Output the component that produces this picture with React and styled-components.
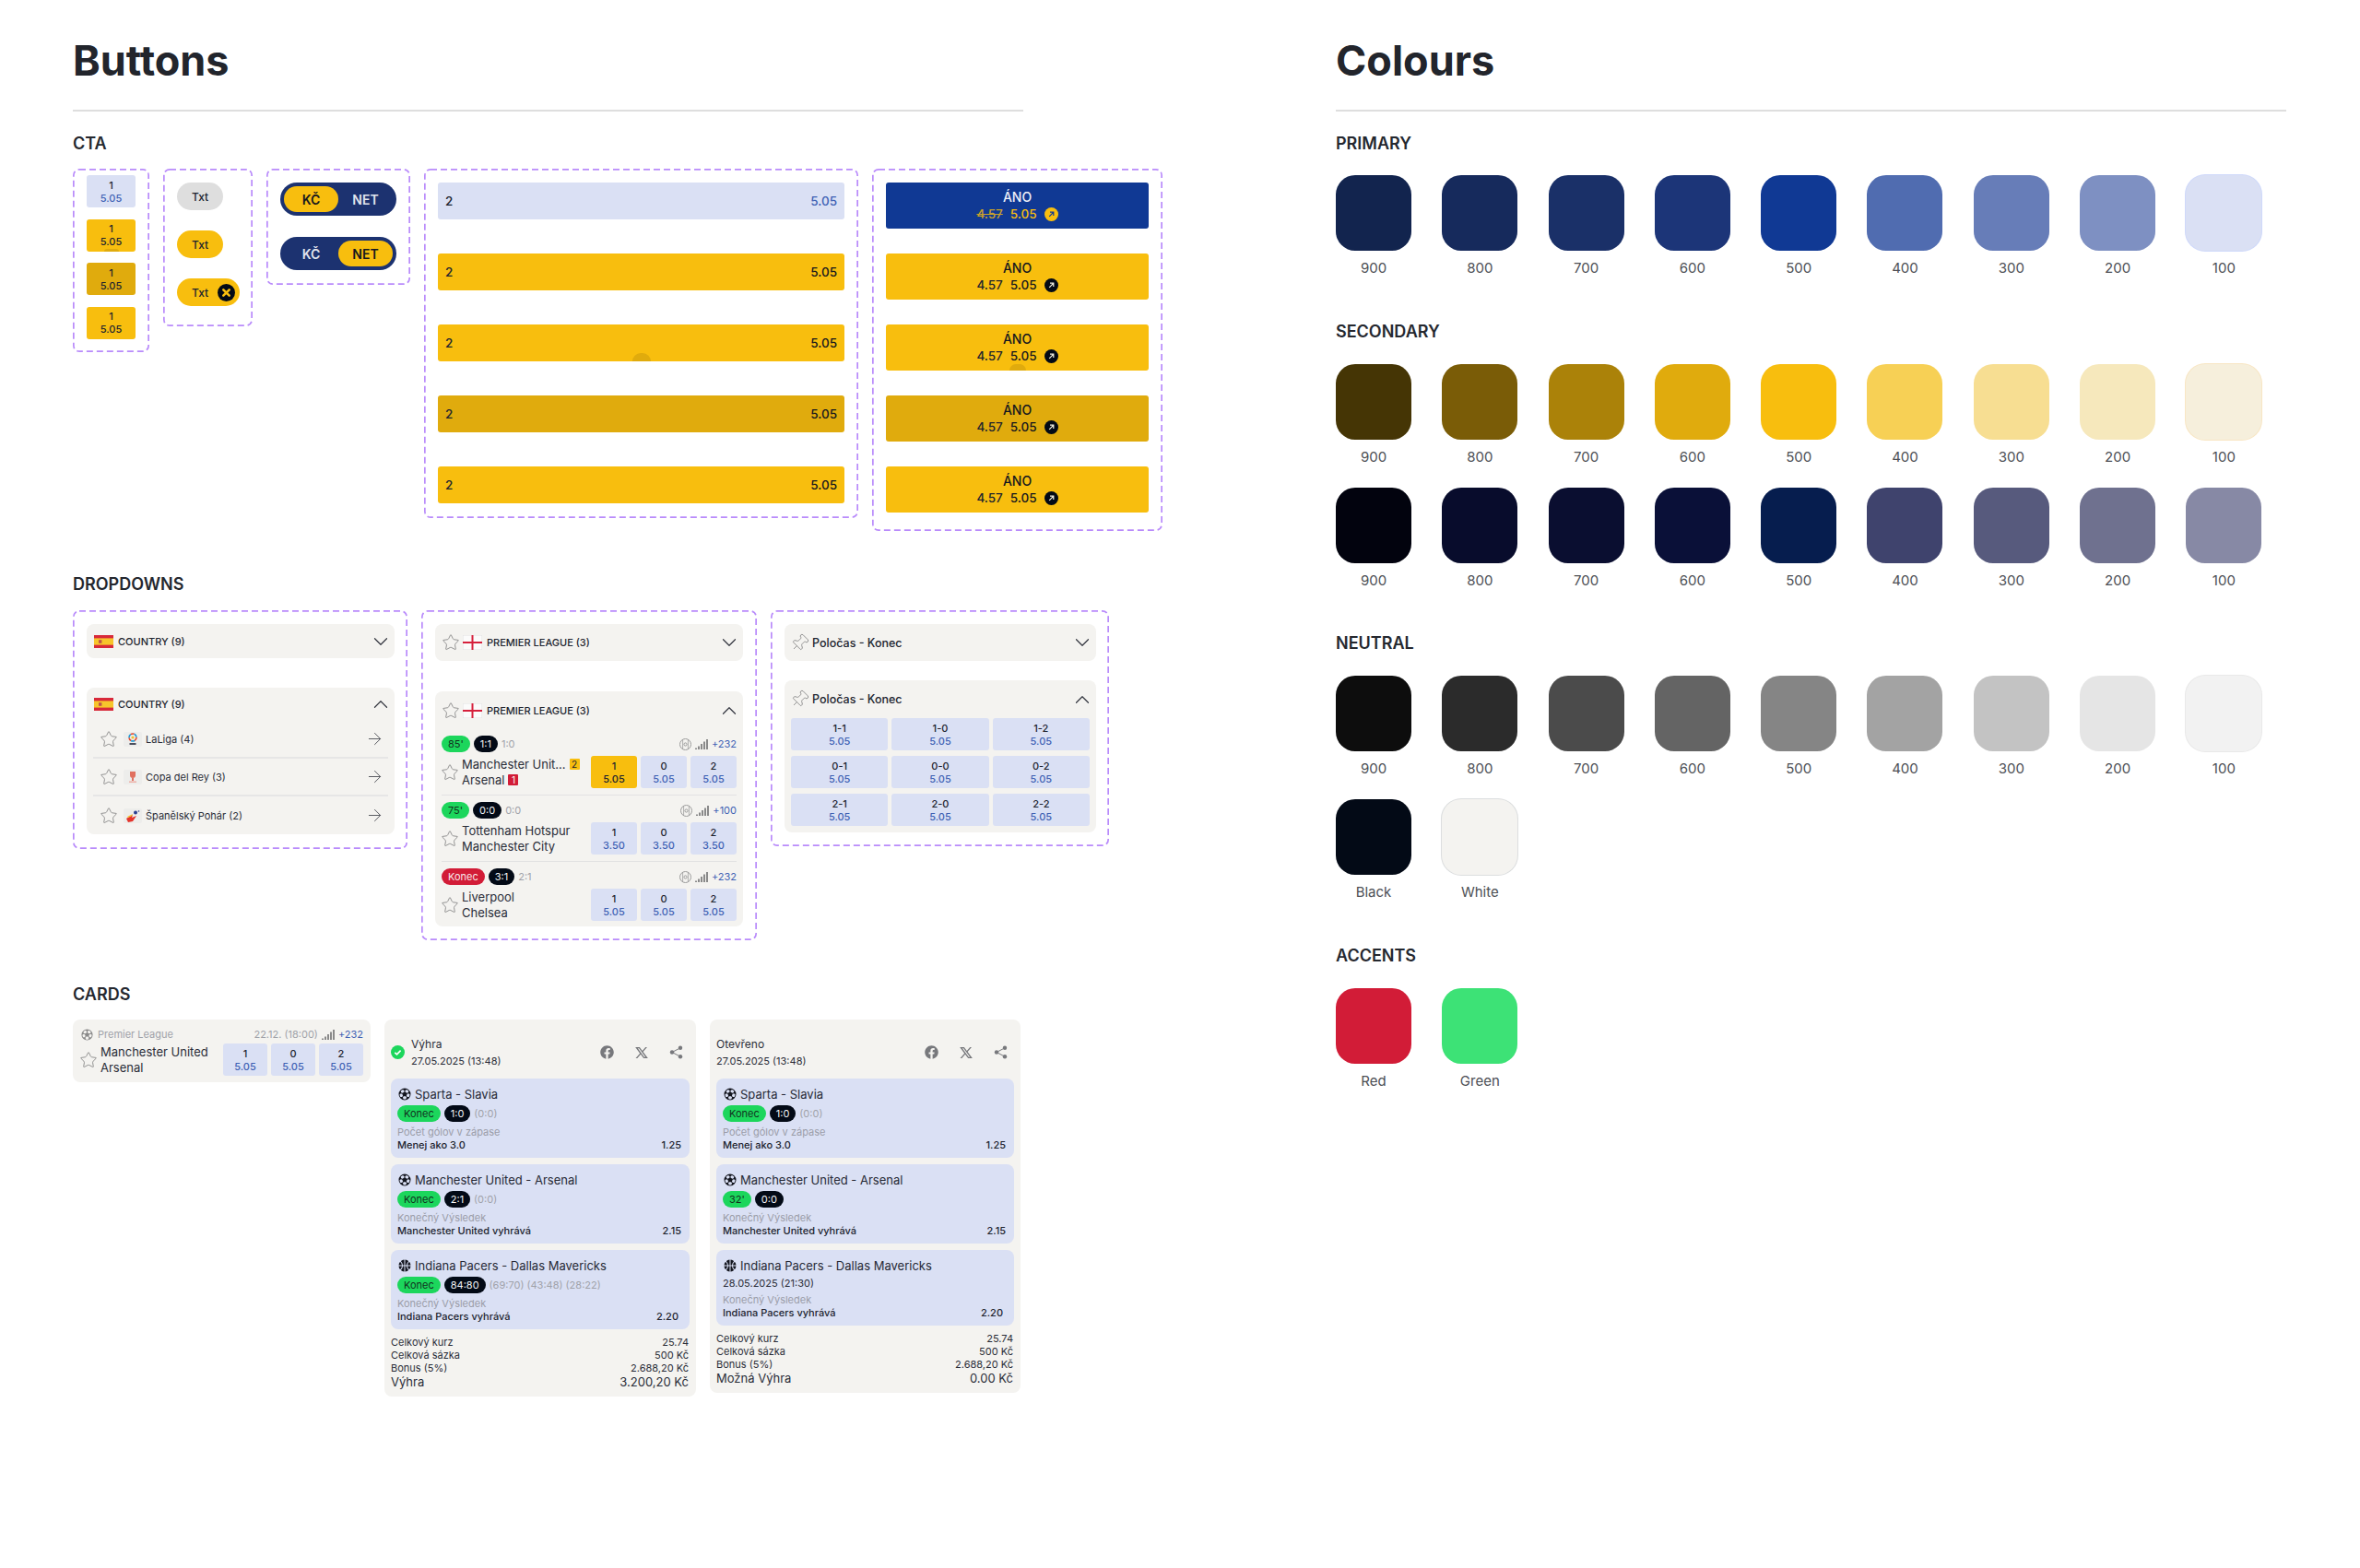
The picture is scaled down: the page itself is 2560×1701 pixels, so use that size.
import React from 'react';
import styled, { createGlobalStyle } from 'styled-components';
import { Star, ChevronDown, ChevronUp, ArrowRight, Pin } from 'lucide-react';
import { FaFacebook } from 'react-icons/fa';
import { PiSoccerBallFill, PiBasketballFill } from 'react-icons/pi';
import { RiTwitterXLine } from 'react-icons/ri';

const GlobalStyle = createGlobalStyle`
  html, body {
    margin: 0;
    padding: 0;
    background: #fff;
  }
  body {
    font-family: "Inter", "Noto Sans", sans-serif;
    color: #1a1e2c;
  }
  * { box-sizing: border-box; }
`;

const Page = styled.div`
  width: 2560px;
  height: 1701px;
  overflow: hidden;
  padding: 39px 0 0 79px;
  display: grid;
  grid-template-columns: 1031px 1031px;
  column-gap: 339px;
  align-items: start;
`;

const Column = styled.section`
  display: flex;
  flex-direction: column;
  min-width: 0;
`;

const Title = styled.h1`
  margin: 0 0 26px;
  font-size: 45px;
  line-height: 54px;
  font-weight: 700;
  color: #22252c;
`;

const Rule = styled.div`
  height: 2px;
  background: #dedede;
`;

const SectionLabel = styled.h2`
  margin: ${p => p.$top}px 0 ${p => p.$bottom}px;
  font-size: 18px;
  line-height: 22px;
  font-weight: 600;
  color: #25282f;
`;

const BoxRow = styled.div`
  display: flex;
  align-items: flex-start;
  gap: 15px;
`;

// css dashed borders come out too short here, so the dash is set by hand
const DashedBox = styled.div`
  width: ${p => p.$w}px;
  flex: none;
  padding: ${p => p.$pad};
  display: flex;
  flex-direction: column;
  gap: ${p => p.$gap}px;
  border: 2px solid transparent;
  border-radius: 7px;
  background-origin: border-box;
  background-image: url("data:image/svg+xml,%3Csvg xmlns='http://www.w3.org/2000/svg' width='100%25' height='100%25'%3E%3Crect width='100%25' height='100%25' fill='none' rx='7' ry='7' stroke='%23b98bfb' stroke-width='3.4' stroke-dasharray='7 4'/%3E%3C/svg%3E");
`;

/* odds */
const oddsBg = { idle: '#dae0f4', active: '#f8be0e', pressed: '#e0ab0d' };

const OddsBtn = styled.div`
  position: relative;
  overflow: hidden;
  width: ${p => (p.$w ? `${p.$w}px` : 'auto')};
  height: 35px;
  flex: none;
  display: flex;
  flex-direction: column;
  align-items: center;
  justify-content: center;
  border-radius: 3px;
  background: ${p => oddsBg[p.$state || 'idle']};
  font-size: 11px;
  line-height: 14px;
  font-weight: 500;
  color: #20232e;
`;

const OddsValue = styled.span`
  color: ${p => (p.$state && p.$state !== 'idle' ? '#20232e' : '#3f62b4')};
`;

const Ripple = styled.span`
  position: absolute;
  left: 50%;
  bottom: 0;
  transform: translateX(-50%);
  width: ${p => p.$w}px;
  height: ${p => p.$h}px;
  border-radius: ${p => p.$w / 2}px ${p => p.$w / 2}px 0 0;
  background: #e0ab0d;
`;

const Odds = ({ label, value, state, w, ripple }) => (
  <OddsBtn $state={state} $w={w}>
    <span>{label}</span>
    <OddsValue $state={state}>{value}</OddsValue>
    {ripple && <Ripple $w={16} $h={3} />}
  </OddsBtn>
);

/* chips and toggles */
const Chip = styled.div`
  align-self: flex-start;
  height: 30px;
  padding: ${p => (p.$closable ? '0 5px 0 16px' : '0 16px')};
  display: flex;
  align-items: center;
  gap: 10px;
  border-radius: 15px;
  background: ${p => (p.$grey ? '#dedede' : '#f8be0e')};
  font-size: 12px;
  font-weight: 500;
  color: #20232e;
`;

const Toggle = styled.div`
  width: 126px;
  height: 36px;
  padding: 4px;
  display: grid;
  grid-template-columns: 1fr 1fr;
  border-radius: 18px;
  background: #1c3270;
`;

const ToggleItem = styled.div`
  display: flex;
  align-items: center;
  justify-content: center;
  border-radius: 14px;
  background: ${p => (p.$on ? '#f8be0e' : 'transparent')};
  color: ${p => (p.$on ? '#14161f' : '#e2e5ee')};
  font-size: 14px;
  font-weight: 600;
`;

/* wide buttons */
const WideBtn = styled.div`
  position: relative;
  overflow: hidden;
  height: 40px;
  padding: 0 8px;
  display: flex;
  align-items: center;
  justify-content: space-between;
  border-radius: 3px;
  background: ${p => oddsBg[p.$state || 'idle']};
  font-size: 13.5px;
  font-weight: 500;
  color: #20232e;
`;

const WideValue = styled.span`
  color: ${p => (p.$state && p.$state !== 'idle' ? '#14161f' : '#3f62b4')};
`;

const BoostBtn = styled.div`
  position: relative;
  overflow: hidden;
  height: 50px;
  display: flex;
  flex-direction: column;
  align-items: center;
  justify-content: center;
  border-radius: 3px;
  background: ${p => (p.$state === 'blue' ? '#103994' : oddsBg[p.$state])};
  color: ${p => (p.$state === 'blue' ? '#eef0f8' : '#14161f')};
  font-size: 14px;
  line-height: 18px;
  font-weight: 500;
`;

const BoostLine = styled.div`
  display: flex;
  align-items: center;
  gap: 8px;
  font-size: 13.5px;
`;

const OldPrice = styled.span`
  color: ${p => (p.$blue ? '#c9a12a' : '#20232e')};
  text-decoration: ${p => (p.$blue ? 'line-through' : 'none')};
`;

const NewPrice = styled.span`
  color: ${p => (p.$blue ? '#f8be0e' : '#14161f')};
`;

const UpBadge = ({ blue }) => (
  <svg width="15" height="15" viewBox="0 0 15 15">
    <circle cx="7.5" cy="7.5" r="7.5" fill={blue ? '#f8be0e' : '#030a16'} />
    <path d="M5.2 9.8 9.6 5.4M6 5.2h3.8V9" fill="none" stroke={blue ? '#103994' : '#f3f0e2'} strokeWidth="1.2" />
  </svg>
);

const CloseBadge = () => (
  <svg width="19" height="19" viewBox="0 0 19 19">
    <circle cx="9.5" cy="9.5" r="9.5" fill="#030a16" />
    <path d="M6.3 6.3l6.4 6.4M12.7 6.3l-6.4 6.4" stroke="#f8be0e" strokeWidth="2.6" strokeLinecap="round" />
  </svg>
);

/* dropdowns */
const DropPanel = styled.div`
  width: 100%;
  margin-top: ${p => p.$top || 0}px;
  padding-bottom: ${p => p.$bottom || 0}px;
  border-radius: 8px;
  background: #f4f3f0;
`;

const DropHead = styled.div`
  height: ${p => p.$h}px;
  padding: 0 8px;
  display: flex;
  align-items: center;
  gap: 5px;
  font-size: ${p => p.$size || 11}px;
  font-weight: 500;
  color: #22252f;
`;

const HeadTitle = styled.span`
  flex: 1;
`;

// $bleed eats the empty margin lucide leaves round its glyphs
const IconSlot = styled.span`
  display: inline-flex;
  flex: none;
  color: ${p => p.$color || '#8a8a8a'};
  svg {
    margin: -${p => p.$bleed || 0}px;
  }
`;

const PinSlot = styled(IconSlot)`
  svg {
    transform: rotate(45deg);
  }
`;

const CountryRow = styled.div`
  height: 41px;
  margin: 0 7px;
  padding: 0 8px;
  display: flex;
  align-items: center;
  gap: 8px;
  border-bottom: ${p => (p.$last ? 'none' : '2px solid #e6e6e6')};
  font-size: 11px;
  color: #2a2d38;
`;

const LogoBox = styled.span`
  width: 20px;
  height: 16px;
  margin-right: -4px;
  flex: none;
  display: flex;
  align-items: center;
  justify-content: center;
  border-radius: 2px;
  background: #ededeb;
`;

const SpainFlag = () => (
  <svg width="21" height="14" viewBox="0 0 21 14">
    <rect width="21" height="14" fill="#d8293a" />
    <rect y="3.4" width="21" height="7.2" fill="#f7c52b" />
    <rect x="5" y="5.2" width="3.4" height="3.6" fill="#c0544a" />
  </svg>
);

const EnglandFlag = () => (
  <svg width="21" height="16" viewBox="0 0 21 16">
    <rect width="21" height="16" fill="#fbfbfb" stroke="#e2e2e2" />
    <path d="M9.5 0h2v16h-2zM0 7h21v2H0z" fill="#d6203c" />
  </svg>
);

const LaLigaLogo = () => (
  <svg width="12" height="14" viewBox="0 0 12 14">
    <circle cx="6" cy="5" r="4" fill="none" stroke="#e6492e" strokeWidth="1.6" strokeDasharray="4 4" />
    <circle cx="6" cy="5" r="4" fill="none" stroke="#1f9ad6" strokeWidth="1.6" strokeDasharray="4 4" strokeDashoffset="4" />
    <circle cx="6" cy="5" r="1.6" fill="#f2c230" />
    <rect x="2.5" y="11" width="7" height="2" fill="#4a4d5c" />
  </svg>
);

const CopaLogo = () => (
  <svg width="12" height="14" viewBox="0 0 12 14">
    <path d="M3 1h6v4a3 3 0 0 1-6 0z" fill="#e0705f" />
    <rect x="5" y="8" width="2" height="3" fill="#e0705f" />
    <rect x="2" y="11.5" width="8" height="1.5" fill="#eeb0a6" />
  </svg>
);

const PoharLogo = () => (
  <svg width="16" height="14" viewBox="0 0 16 14">
    <path d="M1 10l7-4-1 3 5-2-4 6-5 1z" fill="#e5342c" />
    <path d="M2 8l6-3-1 2-4 2z" fill="#f4c22b" />
    <circle cx="11" cy="3.5" r="2" fill="#2a3f8f" />
    <circle cx="14.5" cy="2" r="0.8" fill="#2a3f8f" />
  </svg>
);

/* match rows */
const MatchRow = styled.div`
  margin: 0 7px;
  padding: ${p => (p.$first ? '6px' : '7px')} 0 ${p => (p.$last ? '0' : '7px')};
  display: flex;
  flex-direction: column;
  gap: 4px;
  border-bottom: ${p => (p.$last ? 'none' : '1px solid #e2e2e2')};
`;

const Line = styled.div`
  display: flex;
  align-items: center;
  gap: ${p => p.$gap ?? 4}px;
  min-height: ${p => p.$h || 0}px;
`;

const Push = styled.span`
  flex: 1;
`;

const pillTones = {
  green: ['#1cd65c', '#12321f'],
  red: ['#d21c37', '#f8e7ea'],
  dark: ['#030a16', '#f2f3f5'],
};

const Pill = styled.span`
  height: 18px;
  padding: 0 7px;
  display: inline-flex;
  align-items: center;
  border-radius: 9px;
  background: ${p => pillTones[p.$tone][0]};
  color: ${p => pillTones[p.$tone][1]};
  font-size: 11px;
  font-weight: 400;
`;

const Muted = styled.span`
  font-size: 11px;
  color: #a0a2a9;
`;

const PlusCount = styled.span`
  font-size: 11px;
  color: #3f62b4;
`;

const TeamsBlock = styled.div`
  flex: 1;
  min-width: 0;
  display: flex;
  flex-direction: column;
  font-size: 13px;
  line-height: 17px;
  color: #2a2d38;
`;

const TeamLine = styled.div`
  display: flex;
  align-items: center;
  gap: 4px;
  white-space: nowrap;
`;

const CardTag = styled.span`
  width: 11px;
  height: 12px;
  display: inline-flex;
  align-items: center;
  justify-content: center;
  border-radius: 1px;
  background: ${p => (p.$red ? '#d21c37' : '#f8be0e')};
  color: ${p => (p.$red ? '#fff' : '#20232e')};
  font-size: 10px;
`;

const OddsGroup = styled.div`
  display: flex;
  gap: 4px;
  flex: none;
`;

const OddsGrid = styled.div`
  margin: 0 7px;
  display: grid;
  grid-template-columns: repeat(3, 1fr);
  column-gap: 4px;
  row-gap: 6px;
`;

const PitchIcon = () => (
  <svg width="13" height="13" viewBox="0 0 13 13" fill="none" stroke="#9a9a9a">
    <circle cx="6.5" cy="6.5" r="6" />
    <circle cx="6.5" cy="6.5" r="1.6" />
    <path d="M3.6 1.4v10.2M9.4 1.4v10.2" strokeWidth=".8" />
  </svg>
);

const SignalIcon = () => (
  <svg width="14" height="11" viewBox="0 0 14 11" fill="#8a8a8a">
    <rect x="0" y="9.5" width="2" height="1.5" />
    <rect x="3" y="7.5" width="2" height="3.5" />
    <rect x="6" y="5" width="2" height="6" />
    <rect x="9" y="2.5" width="2" height="8.5" />
    <rect x="12" y="0" width="2" height="11" />
  </svg>
);

const MatchStar = () => (
  <IconSlot $bleed={1.5}>
    <Star size={20} strokeWidth={1.1} />
  </IconSlot>
);

const Chevron = ({ up }) => (
  <IconSlot $color="#33363f" $bleed={6}>
    {up ? <ChevronUp size={26} strokeWidth={1.1} /> : <ChevronDown size={26} strokeWidth={1.1} />}
  </IconSlot>
);

const GoArrow = () => (
  <IconSlot $color="#55575e" $bleed={4}>
    <ArrowRight size={21} strokeWidth={1.1} />
  </IconSlot>
);

const PinIcon = () => (
  <PinSlot $bleed={2}>
    <Pin size={21} strokeWidth={1} />
  </PinSlot>
);

const matches = [
  { tone: 'green', status: "85'", score: '1:1', half: '1:0', more: '+232', home: 'Manchester Unit...', homeTag: '2', away: 'Arsenal', awayTag: '1', odds: '5.05', active: true },
  { tone: 'green', status: "75'", score: '0:0', half: '0:0', more: '+100', home: 'Tottenham Hotspur', away: 'Manchester City', odds: '3.50' },
  { tone: 'red', status: 'Konec', score: '3:1', half: '2:1', more: '+232', home: 'Liverpool', away: 'Chelsea', odds: '5.05' },
];

const Match = ({ m, first, last }) => (
  <MatchRow $first={first} $last={last}>
    <Line>
      <Pill $tone={m.tone}>{m.status}</Pill>
      <Pill $tone="dark">{m.score}</Pill>
      <Muted>{m.half}</Muted>
      <Push />
      <PitchIcon />
      <SignalIcon />
      <PlusCount>{m.more}</PlusCount>
    </Line>
    <Line $gap={5}>
      <MatchStar />
      <TeamsBlock>
        <TeamLine>
          {m.home}
          {m.homeTag && <CardTag>{m.homeTag}</CardTag>}
        </TeamLine>
        <TeamLine>
          {m.away}
          {m.awayTag && <CardTag $red>{m.awayTag}</CardTag>}
        </TeamLine>
      </TeamsBlock>
      <OddsGroup>
        <Odds label="1" value={m.odds} w={50} state={m.active ? 'active' : 'idle'} />
        <Odds label="0" value={m.odds} w={50} />
        <Odds label="2" value={m.odds} w={50} />
      </OddsGroup>
    </Line>
  </MatchRow>
);

/* cards */
const LeagueCard = styled.div`
  width: 323px;
  height: 68px;
  flex: none;
  padding: 7px 8px;
  display: flex;
  flex-direction: column;
  gap: 1px;
  border-radius: 8px;
  background: #f4f3f0;
`;

const BetCard = styled.div`
  width: ${p => p.$w}px;
  flex: none;
  padding: 7px 7px 8px;
  border-radius: 8px;
  background: #f4f3f0;
`;

const BetHead = styled.div`
  height: 57px;
  display: flex;
  align-items: center;
  gap: 7px;
`;

const BetHeadText = styled.div`
  flex: 1;
  display: flex;
  flex-direction: column;
  font-size: 12px;
  line-height: 18px;
  color: #2a2d38;
`;

const BetDate = styled.span`
  font-size: 11px;
`;

const ShareGroup = styled.div`
  display: flex;
  align-items: center;
  gap: 22px;
  padding-right: 7px;
  color: #77787c;
`;

const Legs = styled.div`
  display: flex;
  flex-direction: column;
  gap: 7px;
`;

const Leg = styled.div`
  padding: 7px 9px 7px 7px;
  border-radius: 8px;
  background: #dae0f4;
`;

const LegTitle = styled.div`
  height: 20px;
  display: flex;
  align-items: center;
  gap: 3px;
  font-size: 13px;
  color: #272a36;
`;

const LegStatus = styled.div`
  margin-top: 2px;
  display: flex;
  align-items: center;
  gap: 4px;
`;

const LegDate = styled.div`
  margin-top: 2px;
  font-size: 11px;
  line-height: 14px;
  color: #2a2d38;
`;

const LegMarket = styled.div`
  margin-top: 4px;
  font-size: 11px;
  line-height: 14px;
  color: #9a9da8;
`;

const LegPick = styled.div`
  display: flex;
  justify-content: space-between;
  font-size: 11px;
  line-height: 14px;
  font-weight: 500;
  color: #20232e;
`;

const PickOdds = styled.span`
  margin-right: ${p => (p.$inset ? 3 : 0)}px;
`;

const Summary = styled.div`
  margin-top: 7px;
  padding-right: 1px;
  display: flex;
  flex-direction: column;
`;

const SummaryRow = styled.div`
  display: flex;
  justify-content: space-between;
  font-size: ${p => (p.$big ? 13 : 11)}px;
  line-height: ${p => (p.$big ? 16 : 14)}px;
  color: #2a2d38;
`;

const WinCheck = () => (
  <svg width="15" height="15" viewBox="0 0 15 15">
    <circle cx="7.5" cy="7.5" r="7.5" fill="#1cd65c" />
    <path d="M4.3 7.8l2.2 2.1 4.1-4.3" fill="none" stroke="#fff" strokeWidth="1.6" />
  </svg>
);

const ShareIcon = () => (
  <svg width="15" height="15" viewBox="0 0 15 15" fill="currentColor" stroke="currentColor">
    <path d="M12 2.8 3 7.5l9 4.7" fill="none" strokeWidth="1" />
    <circle cx="12" cy="2.8" r="2.2" stroke="none" />
    <circle cx="3" cy="7.5" r="2.2" stroke="none" />
    <circle cx="12" cy="12.2" r="2.2" stroke="none" />
  </svg>
);

const SportIcon = ({ basket }) => (
  <IconSlot $color="#14161f">
    {basket ? <PiBasketballFill size={16} /> : <PiSoccerBallFill size={16} />}
  </IconSlot>
);

const BetLeg = ({ leg }) => (
  <Leg>
    <LegTitle>
      <SportIcon basket={leg.basket} />
      {leg.title}
    </LegTitle>
    {leg.date ? (
      <LegDate>{leg.date}</LegDate>
    ) : (
      <LegStatus>
        <Pill $tone="green">{leg.status}</Pill>
        <Pill $tone="dark">{leg.score}</Pill>
        {leg.half && <Muted>{leg.half}</Muted>}
      </LegStatus>
    )}
    <LegMarket>{leg.market}</LegMarket>
    <LegPick>
      <span>{leg.pick}</span>
      <PickOdds $inset={leg.basket}>{leg.odds}</PickOdds>
    </LegPick>
  </Leg>
);

const Bet = ({ w, won, title, legs, resultLabel, result }) => (
  <BetCard $w={w}>
    <BetHead>
      {won && <WinCheck />}
      <BetHeadText>
        <span>{title}</span>
        <BetDate>27.05.2025 (13:48)</BetDate>
      </BetHeadText>
      <ShareGroup>
        <FaFacebook size={15} />
        <RiTwitterXLine size={16} />
        <ShareIcon />
      </ShareGroup>
    </BetHead>
    <Legs>
      {legs.map(leg => <BetLeg key={leg.title} leg={leg} />)}
    </Legs>
    <Summary>
      <SummaryRow><span>Celkový kurz</span><span>25.74</span></SummaryRow>
      <SummaryRow><span>Celková sázka</span><span>500 Kč</span></SummaryRow>
      <SummaryRow><span>Bonus (5%)</span><span>2.688,20 Kč</span></SummaryRow>
      <SummaryRow $big><span>{resultLabel}</span><span>{result}</span></SummaryRow>
    </Summary>
  </BetCard>
);

const wonLegs = [
  { title: 'Sparta - Slavia', status: 'Konec', score: '1:0', half: '(0:0)', market: 'Počet gólov v zápase', pick: 'Menej ako 3.0', odds: '1.25' },
  { title: 'Manchester United - Arsenal', status: 'Konec', score: '2:1', half: '(0:0)', market: 'Konečný Výsledek', pick: 'Manchester United vyhrává', odds: '2.15' },
  { title: 'Indiana Pacers - Dallas Mavericks', basket: true, status: 'Konec', score: '84:80', half: '(69:70) (43:48) (28:22)', market: 'Konečný Výsledek', pick: 'Indiana Pacers vyhrává', odds: '2.20' },
];

const openLegs = [
  wonLegs[0],
  { title: 'Manchester United - Arsenal', status: "32'", score: '0:0', market: 'Konečný Výsledek', pick: 'Manchester United vyhrává', odds: '2.15' },
  { title: 'Indiana Pacers - Dallas Mavericks', basket: true, date: '28.05.2025 (21:30)', market: 'Konečný Výsledek', pick: 'Indiana Pacers vyhrává', odds: '2.20' },
];

/* colours */
const SwatchGrid = styled.div`
  display: grid;
  grid-template-columns: repeat(9, 82px);
  column-gap: 33.3px;
  row-gap: 23px;
  margin-top: ${p => p.$top || 0}px;
`;

const SwatchItem = styled.div`
  display: flex;
  flex-direction: column;
  align-items: center;
  gap: 9px;
  font-size: 15px;
  line-height: 20px;
  color: #4d4f55;
`;

const SwatchTile = styled.div`
  width: 82px;
  height: 82px;
  border-radius: 21px;
  background: ${p => p.$color};
  box-shadow: ${p => (p.$edge ? `0 0 0 1px ${p.$edge}` : 'none')};
`;

const Swatches = ({ items, top }) => (
  <SwatchGrid $top={top}>
    {items.map(([color, label, edge]) => (
      <SwatchItem key={color}>
        <SwatchTile $color={color} $edge={edge} />
        {label}
      </SwatchItem>
    ))}
  </SwatchGrid>
);

const steps = ['900', '800', '700', '600', '500', '400', '300', '200', '100'];
const withSteps = (colors, lastEdge) =>
  colors.map((c, i) => [c, steps[i], i === 8 ? lastEdge : undefined]);

const primary = withSteps(['#12244e', '#162a5c', '#1a3068', '#1c3578', '#103994', '#506cb0', '#677db8', '#7e90c2', '#dae0f4'], '#cfd9fa');
const secondaryA = withSteps(['#453505', '#7a5c07', '#ab8209', '#e0ab0d', '#f8be0e', '#f7d055', '#f7de92', '#f6e8bc', '#f6efdc'], '#f8e6c4');
const secondaryB = withSteps(['#02030e', '#080c2c', '#0a0e30', '#0a1038', '#061d4e', '#3f436d', '#575a7d', '#6f718f', '#8789a5']);
const neutral = [
  ...withSteps(['#0d0d0d', '#2b2b2b', '#4b4b4b', '#646464', '#858585', '#a3a3a3', '#c3c3c3', '#e5e5e5', '#f2f2f2'], '#e9e9e9'),
  ['#030a16', 'Black'],
  ['#f4f3f0', 'White', '#dcdedf'],
];
const accents = [['#d21c37', 'Red'], ['#3de276', 'Green']];

const wideStates = ['idle', 'active', 'active', 'pressed', 'active'];
const boostStates = ['blue', 'active', 'active', 'pressed', 'active'];
const scoreGrid = ['1-1', '1-0', '1-2', '0-1', '0-0', '0-2', '2-1', '2-0', '2-2'];

function App() {
  return (
    <Page>
      <GlobalStyle />
      <Column>
        <Title>Buttons</Title>
        <Rule />
        <SectionLabel $top={24} $bottom={16}>CTA</SectionLabel>
        <BoxRow>
          <DashedBox $w={83} $pad="5px 13px 12.5px" $gap={12.5}>
            <Odds label="1" value="5.05" />
            <Odds label="1" value="5.05" state="active" ripple />
            <Odds label="1" value="5.05" state="pressed" />
            <Odds label="1" value="5.05" state="active" />
          </DashedBox>
          <DashedBox $w={97} $pad="13px 13px 20px" $gap={22}>
            <Chip $grey>Txt</Chip>
            <Chip>Txt</Chip>
            <Chip $closable>Txt<CloseBadge /></Chip>
          </DashedBox>
          <DashedBox $w={156} $pad="13px 13px 14px" $gap={23}>
            <Toggle>
              <ToggleItem $on>KČ</ToggleItem>
              <ToggleItem>NET</ToggleItem>
            </Toggle>
            <Toggle>
              <ToggleItem>KČ</ToggleItem>
              <ToggleItem $on>NET</ToggleItem>
            </Toggle>
          </DashedBox>
          <DashedBox $w={471} $pad="13px 13px 14px" $gap={37}>
            {wideStates.map((state, i) => (
              <WideBtn key={i} $state={state}>
                <span>2</span>
                <WideValue $state={state}>5.05</WideValue>
                {i === 2 && <Ripple $w={20} $h={9} />}
              </WideBtn>
            ))}
          </DashedBox>
          <DashedBox $w={315} $pad="13px 13px 18px" $gap={27}>
            {boostStates.map((state, i) => (
              <BoostBtn key={i} $state={state}>
                ÁNO
                <BoostLine>
                  <OldPrice $blue={state === 'blue'}>4.57</OldPrice>
                  <NewPrice $blue={state === 'blue'}>5.05</NewPrice>
                  <UpBadge blue={state === 'blue'} />
                </BoostLine>
                {i === 2 && <Ripple $w={18} $h={7} />}
              </BoostBtn>
            ))}
          </DashedBox>
        </BoxRow>

        <SectionLabel $top={47} $bottom={17}>DROPDOWNS</SectionLabel>
        <BoxRow>
          <DashedBox $w={363} $pad="13px 12px 14px 13px" $gap={0}>
            <DropPanel>
              <DropHead $h={37}>
                <SpainFlag />
                <HeadTitle>COUNTRY (9)</HeadTitle>
                <Chevron />
              </DropHead>
            </DropPanel>
            <DropPanel $top={32}>
              <DropHead $h={36}>
                <SpainFlag />
                <HeadTitle>COUNTRY (9)</HeadTitle>
                <Chevron up />
              </DropHead>
              <CountryRow>
                <MatchStar />
                <LogoBox><LaLigaLogo /></LogoBox>
                <HeadTitle>LaLiga (4)</HeadTitle>
                <GoArrow />
              </CountryRow>
              <CountryRow>
                <MatchStar />
                <LogoBox><CopaLogo /></LogoBox>
                <HeadTitle>Copa del Rey (3)</HeadTitle>
                <GoArrow />
              </CountryRow>
              <CountryRow $last>
                <MatchStar />
                <LogoBox><PoharLogo /></LogoBox>
                <HeadTitle>Španělský Pohár (2)</HeadTitle>
                <GoArrow />
              </CountryRow>
            </DropPanel>
          </DashedBox>

          <DashedBox $w={364} $pad="13px 13px 13px" $gap={0}>
            <DropPanel>
              <DropHead $h={40}>
                <MatchStar />
                <EnglandFlag />
                <HeadTitle>PREMIER LEAGUE (3)</HeadTitle>
                <Chevron />
              </DropHead>
            </DropPanel>
            <DropPanel $top={33} $bottom={6}>
              <DropHead $h={42}>
                <MatchStar />
                <EnglandFlag />
                <HeadTitle>PREMIER LEAGUE (3)</HeadTitle>
                <Chevron up />
              </DropHead>
              {matches.map((m, i) => (
                <Match key={m.home} m={m} first={i === 0} last={i === 2} />
              ))}
            </DropPanel>
          </DashedBox>

          <DashedBox $w={367} $pad="13px 12px 13px 13px" $gap={0}>
            <DropPanel>
              <DropHead $h={40} $size={12.5}>
                <PinIcon />
                <HeadTitle>Poločas - Konec</HeadTitle>
                <Chevron />
              </DropHead>
            </DropPanel>
            <DropPanel $top={21} $bottom={7}>
              <DropHead $h={41} $size={12.5}>
                <PinIcon />
                <HeadTitle>Poločas - Konec</HeadTitle>
                <Chevron up />
              </DropHead>
              <OddsGrid>
                {scoreGrid.map(label => <Odds key={label} label={label} value="5.05" />)}
              </OddsGrid>
            </DropPanel>
          </DashedBox>
        </BoxRow>

        <SectionLabel $top={48} $bottom={16}>CARDS</SectionLabel>
        <BoxRow>
          <LeagueCard>
            <Line $gap={4} $h={18}>
              <IconSlot $color="#8a8a8a"><PiSoccerBallFill size={15} /></IconSlot>
              <Muted>Premier League</Muted>
              <Push />
              <Muted>22.12. (18:00)</Muted>
              <SignalIcon />
              <PlusCount>+232</PlusCount>
            </Line>
            <Line $gap={5}>
              <MatchStar />
              <TeamsBlock>
                <span>Manchester United</span>
                <span>Arsenal</span>
              </TeamsBlock>
              <OddsGroup>
                <Odds label="1" value="5.05" w={48} />
                <Odds label="0" value="5.05" w={48} />
                <Odds label="2" value="5.05" w={48} />
              </OddsGroup>
            </Line>
          </LeagueCard>
          <Bet w={338} won title="Výhra" legs={wonLegs} resultLabel="Výhra" result="3.200,20 Kč" />
          <Bet w={337} title="Otevřeno" legs={openLegs} resultLabel="Možná Výhra" result="0.00 Kč" />
        </BoxRow>
      </Column>

      <Column>
        <Title>Colours</Title>
        <Rule />
        <SectionLabel $top={24} $bottom={23}>PRIMARY</SectionLabel>
        <Swatches items={primary} />
        <SectionLabel $top={48} $bottom={24}>SECONDARY</SectionLabel>
        <Swatches items={secondaryA} />
        <Swatches items={secondaryB} top={23} />
        <SectionLabel $top={47} $bottom={24}>NEUTRAL</SectionLabel>
        <Swatches items={neutral} />
        <SectionLabel $top={48} $bottom={24}>ACCENTS</SectionLabel>
        <Swatches items={accents} />
      </Column>
    </Page>
  );
}

export default App;
